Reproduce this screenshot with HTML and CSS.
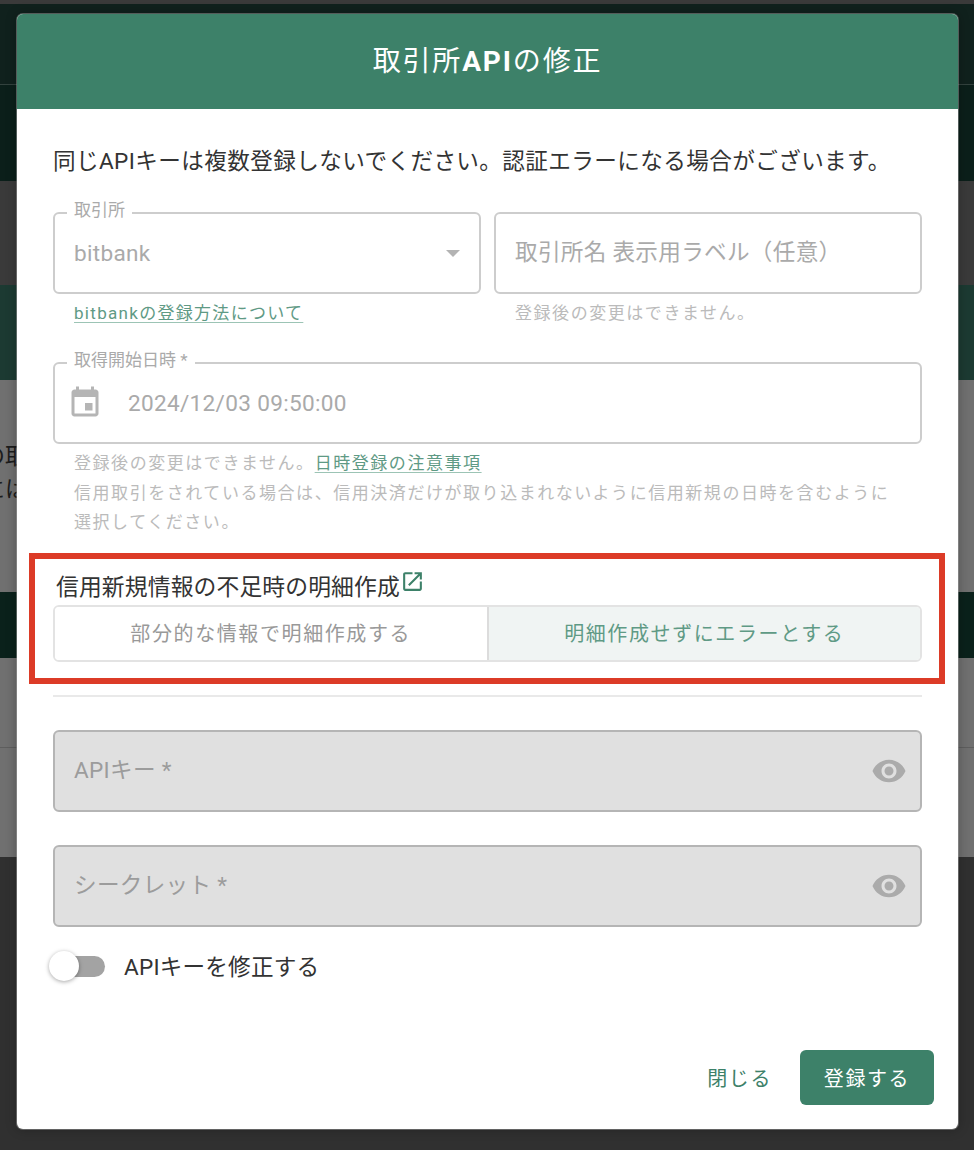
FILE: index.html
```html
<!DOCTYPE html>
<html lang="ja">
<head>
<meta charset="utf-8">
<title>取引所APIの修正</title>
<link rel="stylesheet" href="styles.css">
</head>
<body>
<div class="backdrop">
  <div class="band band-top"></div>
  <div class="band band-dark band-dark-a"></div>
  <div class="band band-dark band-dark-b"></div>
  <div class="band band-gray-dark"></div>
  <div class="band band-green"></div>
  <div class="band band-gray band-text">
    <p class="behind">の取</p>
    <p class="behind behind-2">には</p>
  </div>
  <div class="band band-darkest"></div>
  <div class="band band-gray band-gray-a"></div>
  <div class="band band-gray band-gray-b"></div>
  <div class="band band-bottom"></div>
</div>

<section class="modal">
  <header class="modal-header">
    <h1>取引所<b>API</b>の修正</h1>
  </header>
  <div class="modal-body">
    <p class="intro">同じAPIキーは複数登録しないでください。認証エラーになる場合がございます。</p>

    <div class="row">
      <div class="col">
        <div class="field">
          <span class="legend">取引所</span>
          <span class="value">bitbank</span>
          <span class="caret"></span>
        </div>
        <p class="help"><a href="#" class="link link-guide">bitbankの登録方法について</a></p>
      </div>
      <div class="col">
        <div class="field field-placeholder">
          <span class="value">取引所名 表示用ラベル（任意）</span>
        </div>
        <p class="help">登録後の変更はできません。</p>
      </div>
    </div>

    <div class="field field-date">
      <span class="legend">取得開始日時 *</span>
      <svg class="icon-date" viewBox="0 0 24 24"><path d="M17 12h-5v5h5v-5zM16 1v2H8V1H6v2H5c-1.11 0-1.99.9-1.99 2L3 19c0 1.1.89 2 2 2h14c1.1 0 2-.9 2-2V5c0-1.1-.9-2-2-2h-1V1h-2zm3 18H5V8h14v11z"/></svg>
      <span class="value">2024/12/03 09:50:00</span>
    </div>
    <p class="help help-date">登録後の変更はできません。<a href="#" class="link">日時登録の注意事項</a><br>信用取引をされている場合は、信用決済だけが取り込まれないように信用新規の日時を含むように<br>選択してください。</p>

    <div class="option">
      <div class="option-title">
        <span>信用新規情報の不足時の明細作成</span>
        <svg class="icon-open" viewBox="0 0 24 24"><path d="M19 19H5V5h7V3H5c-1.11 0-2 .9-2 2v14c0 1.1.89 2 2 2h14c1.1 0 2-.9 2-2v-7h-2v7zM14 3v2h3.59l-9.83 9.83 1.41 1.41L19 6.41V10h2V3h-7z"/></svg>
      </div>
      <div class="toggle-group">
        <button class="toggle">部分的な情報で明細作成する</button>
        <button class="toggle toggle-on">明細作成せずにエラーとする</button>
      </div>
      <div class="highlight"></div>
    </div>

    <hr class="divider">

    <div class="field field-disabled">
      <span class="value">APIキー *</span>
      <svg class="icon-eye" viewBox="0 0 24 24"><path d="M12 4.5C7 4.5 2.73 7.61 1 12c1.73 4.39 6 7.5 11 7.5s9.27-3.11 11-7.5c-1.73-4.39-6-7.5-11-7.5zM12 17c-2.76 0-5-2.24-5-5s2.24-5 5-5 5 2.24 5 5-2.24 5-5 5zm0-8c-1.66 0-3 1.34-3 3s1.34 3 3 3 3-1.34 3-3-1.34-3-3-3z"/></svg>
    </div>
    <div class="field field-disabled field-secret">
      <span class="value">シークレット *</span>
      <svg class="icon-eye" viewBox="0 0 24 24"><path d="M12 4.5C7 4.5 2.73 7.61 1 12c1.73 4.39 6 7.5 11 7.5s9.27-3.11 11-7.5c-1.73-4.39-6-7.5-11-7.5zM12 17c-2.76 0-5-2.24-5-5s2.24-5 5-5 5 2.24 5 5-2.24 5-5 5zm0-8c-1.66 0-3 1.34-3 3s1.34 3 3 3 3-1.34 3-3-1.34-3-3-3z"/></svg>
    </div>

    <div class="switch-row">
      <span class="switch"><span class="thumb"></span></span>
      <span class="switch-label">APIキーを修正する</span>
    </div>
  </div>
  <footer class="modal-footer">
    <button class="btn btn-text">閉じる</button>
    <button class="btn btn-primary">登録する</button>
  </footer>
</section>
</body>
</html>
```

FILE: styles.css
```css
* { box-sizing: border-box; }
html, body { margin: 0; padding: 0; height: 100%; }
body {
  width: 974px;
  height: 1150px;
  position: relative;
  overflow: hidden;
  font-family: Roboto, "Noto Sans CJK JP", sans-serif;
  background: #303030;
}

/* dimmed page behind the dialog */
.backdrop { display: flex; flex-direction: column; height: 1150px; }
.band { flex: none; }
.band-top { height: 4px; background: #3a3a3a; }
.band-dark-a { height: 81px; background: #10211d; border-bottom: 1px solid #33423e; }
.band-dark-b { height: 96px; background: #0b1f1a; }
.band-gray-dark { height: 104px; background: #3a3a3a; }
.band-green { height: 95px; background: #1c3a32; }
.band-gray { background: #707070; }
.band-text { height: 212px; padding-top: 60px; overflow: hidden; }
.band-darkest { height: 66px; background: #0a211b; }
.band-gray-a { height: 90px; border-bottom: 1px solid #5e5e5e; }
.band-gray-b { height: 109px; }
.band-bottom { flex: 1; background: #303030; }
.behind {
  margin: 0 0 0 -18px;
  font: 23px/33px "Liberation Serif", "Noto Sans CJK JP", serif;
  color: #1c1c1c;
  white-space: nowrap;
}

/* dialog */
.modal {
  position: absolute;
  left: 17px;
  top: 14px;
  width: 941px;
  height: 1115px;
  display: flex;
  flex-direction: column;
  background: #fff;
  border-radius: 6px;
  box-shadow: 0 0 0 1px rgba(170,170,170,.45), 0 0 12px rgba(0,0,0,.3);
}
.modal-header {
  height: 95px;
  flex: none;
  display: flex;
  align-items: center;
  justify-content: center;
  padding-bottom: 6px;
  background: #3d8169;
  border-radius: 6px 6px 0 0;
}
.modal-header h1 {
  margin: 0;
  font-size: 28px;
  font-weight: 400;
  letter-spacing: 1.85px;
  color: #fff;
}
.modal-header b { font-weight: 700; }
.modal-body { flex: 1; padding: 36px 36px 0; }
.intro {
  margin: 0;
  font-size: 22.6px;
  line-height: 34px;
  letter-spacing: .39px;
  color: #333;
}

.row { display: flex; gap: 13px; margin-top: 33px; }
.col { flex: 1; min-width: 0; }

.field {
  position: relative;
  height: 82px;
  display: flex;
  align-items: center;
  padding: 0 19px;
  border: 2px solid #cdcdcd;
  border-radius: 6px;
}
.field-placeholder { padding-bottom: 5px; }
.legend {
  position: absolute;
  left: 12px;
  top: -16px;
  padding: 0 7px;
  background: linear-gradient(transparent 14px, #fff 14px);
  font-size: 17px;
  line-height: 24px;
  color: #aaa;
}
.value { font-size: 22.6px; letter-spacing: .3px; color: #aaa; white-space: nowrap; }
.caret {
  position: absolute;
  right: 19px;
  top: 36px;
  border: 7px solid transparent;
  border-top-color: #b3b3b3;
  border-bottom: 0;
}
.help {
  margin: 0;
  padding: 7px 21px 0;
  font-size: 17px;
  line-height: 25px;
  letter-spacing: 1.55px;
  color: #bbb;
}
.link {
  color: #5f9a85;
  text-decoration: underline;
  text-decoration-color: #9cc4b5;
  text-underline-offset: 3px;
}
.link-guide { letter-spacing: 1.3px; }

.field-date { margin-top: 36px; gap: 25px; padding-left: 12px; }
.icon-date { width: 36px; height: 36px; fill: #b5b5b5; flex: none; }
.help-date { line-height: 29.5px; padding-top: 5px; }

.option { position: relative; margin-top: 30px; }
.option-title {
  display: flex;
  align-items: flex-start;
  height: 37px;
  padding: 5px 0 0 3px;
  font-size: 22.8px;
  line-height: 30px;
  letter-spacing: .13px;
  color: #333;
}
.icon-open { width: 25px; height: 25px; fill: #3d8169; flex: none; margin-top: -4px; }
.toggle-group {
  display: flex;
  height: 57px;
  border: 2px solid #e3e3e3;
  border-radius: 6px;
  overflow: hidden;
}
.toggle {
  flex: 1;
  padding: 0 0 2px;
  border: 0;
  background: #fff;
  font-family: inherit;
  font-size: 20px;
  letter-spacing: 1.6px;
  color: #999;
}
.toggle-on {
  background: #f0f4f3;
  border-left: 2px solid #dcdcdc;
  color: #5f9a85;
}
.highlight {
  position: absolute;
  left: -24px;
  right: -23px;
  top: -15px;
  bottom: -22px;
  border: 6px solid #dc3b27;
  pointer-events: none;
}

.divider { height: 2px; margin: 33px 0 33px; border: 0; background: #e9e9e9; }

.field-disabled { padding-bottom: 4px; background: #e0e0e0; border-color: #b5b5b5; }
.field-disabled .value { color: #9c9c9c; }
.field-secret { margin-top: 33px; }
.icon-eye { position: absolute; right: 13px; top: 21px; width: 36px; height: 36px; fill: #ababab; }

.switch-row { display: flex; align-items: center; margin-top: 21px; height: 38px; }
.switch {
  position: relative;
  width: 41px;
  height: 21px;
  margin-left: 11px;
  background: #a3a3a3;
  border-radius: 11px;
}
.thumb {
  position: absolute;
  left: -15px;
  top: -5px;
  width: 30px;
  height: 30px;
  border-radius: 50%;
  background: #fff;
  box-shadow: 0 1px 4px rgba(0,0,0,.35);
}
.switch-label { margin-left: 19px; padding-bottom: 2px; font-size: 22.6px; letter-spacing: .2px; color: #333; }

.modal-footer {
  flex: none;
  display: flex;
  justify-content: flex-end;
  align-items: center;
  gap: 11px;
  padding: 0 24px 24px;
}
.btn {
  height: 55px;
  padding: 0 24px;
  border: 0;
  border-radius: 6px;
  font-family: inherit;
  font-size: 20px;
  letter-spacing: 1.6px;
  cursor: pointer;
}
.btn-text { padding: 0 17px; background: transparent; color: #3d8169; }
.btn-primary { width: 134px; padding: 0; background: #3d8169; color: #fff; }
```
